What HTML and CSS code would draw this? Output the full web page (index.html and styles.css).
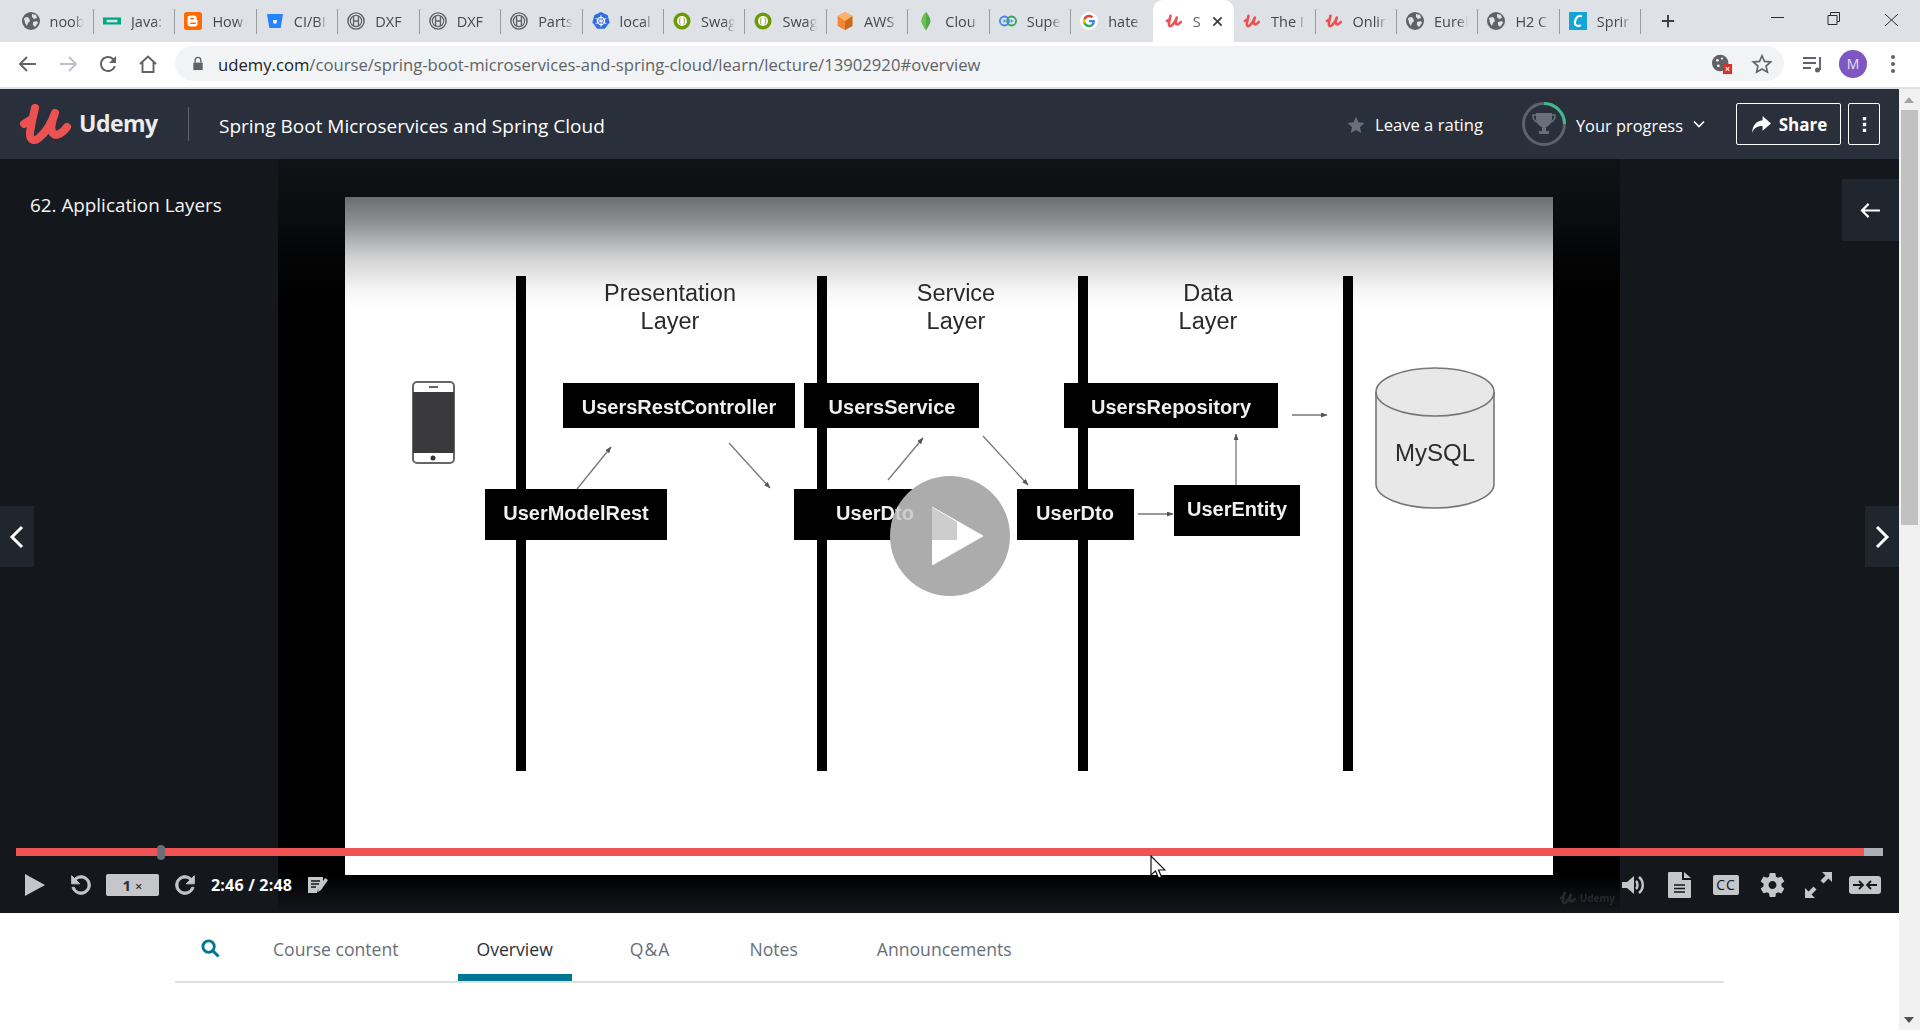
FILE: index.html
```html
<!DOCTYPE html>
<html lang="en">
<head>
    <meta charset="UTF-8">
    <title>Spring Boot Microservices and Spring Cloud | Udemy</title>
    <link rel="stylesheet" href="styles.css">
</head>
<body>
    <!-- icon sprite -->
    <svg class="sprite" xmlns="http://www.w3.org/2000/svg">
        <symbol id="fav-globe" viewBox="0 0 18 18">
            <circle cx="9" cy="9" r="9" fill="#5f6368"/>
            <path d="M2 6l3-1 2 1 1 3-2 2-1 3-2-3zM10 2l4 1 1 3-3 1-2-2zM11 10l4-1 1 2-3 4-2-2z" fill="#dee1e6"/>
        </symbol>
        <symbol id="fav-hpe" viewBox="0 0 20 18">
            <path d="M0 5h20v8H0zM4 7.500v3h12v-3z" fill="#01a982" fill-rule="evenodd"/>
        </symbol>
        <symbol id="fav-blogger" viewBox="0 0 20 20">
            <rect width="20" height="20" rx="3" fill="#ff6a00"/>
            <path d="M7 4h4a3 3 0 0 1 3 3v1a1 1 0 0 0 1 1v4a3 3 0 0 1-3 3H7a3 3 0 0 1-3-3V7a3 3 0 0 1 3-3z" fill="#fff"/>
            <path d="M7.500 7.500h3M7.500 12.500h5" stroke="#ff6a00" stroke-width="1.600" stroke-linecap="round"/>
        </symbol>
        <symbol id="fav-bitbucket" viewBox="0 0 18 18">
            <path d="M1 2h16l-2.300 14H3.300z" fill="#2684ff"/>
            <path d="M7 8h4l-.6 3.500H7.600z" fill="#fff"/>
        </symbol>
        <symbol id="fav-bosch" viewBox="0 0 20 20">
            <circle cx="10" cy="10" r="9" fill="none" stroke="#5f6368" stroke-width="1.600"/>
            <circle cx="10" cy="10" r="6.300" fill="none" stroke="#5f6368" stroke-width="1.300"/>
            <path d="M7.300 4.500v11M12.700 4.500v11M7.300 10h5.400" stroke="#5f6368" stroke-width="1.500" fill="none"/>
        </symbol>
        <symbol id="fav-k8s" viewBox="0 0 20 20">
            <path d="M10 0l7.500 3.600 2 8.200-5.200 6.700H5.700L.5 11.800l2-8.200z" fill="#326ce5"/>
            <circle cx="10" cy="10" r="4" fill="none" stroke="#fff" stroke-width="1.300"/>
            <path d="M10 3.500v13M4 7l12 6M16 7L4 13" stroke="#fff" stroke-width="1"/>
        </symbol>
        <symbol id="fav-swagger" viewBox="0 0 20 20">
            <circle cx="10" cy="10" r="9.500" fill="#6b9a06"/>
            <circle cx="10" cy="10" r="5.500" fill="#fff"/>
            <path d="M8.500 6.500c-1.500 0-1 2-1 3s-1 .5-1 .5 1 0 1 1-.5 2.500 1 2.500M11.500 6.500c1.500 0 1 2 1 3s1 .5 1 .5-1 0-1 1 .5 2.500-1 2.500" stroke="#6b9a06" stroke-width=".9" fill="none"/>
        </symbol>
        <symbol id="fav-aws" viewBox="0 0 20 22">
            <path d="M10 0l9 5v12l-9 5-9-5V5z" fill="#f58534"/>
            <path d="M10 11l9-6v12l-9 5z" fill="#c96a1f"/>
            <path d="M10 0l9 5-9 6-9-6z" fill="#fbb36c"/>
        </symbol>
        <symbol id="fav-mongo" viewBox="0 0 12 22">
            <path d="M6 0c3 4 5.500 7 5.500 11S8 18 6.500 22H5.500C4 18 .5 15 .5 11S3 4 6 0z" fill="#4faa41"/>
            <path d="M6 0v22C4 18 .5 15 .5 11S3 4 6 0z" fill="#6cc24a"/>
        </symbol>
        <symbol id="fav-super" viewBox="0 0 20 14">
            <circle cx="6" cy="7" r="5" fill="none" stroke="#4285f4" stroke-width="2"/>
            <circle cx="14" cy="7" r="5" fill="none" stroke="#34a853" stroke-width="2"/>
            <path d="M5 5l3 2-3 2zM13 5l3 2-3 2z" fill="#4285f4"/>
        </symbol>
        <symbol id="fav-google" viewBox="0 0 24 24">
            <circle cx="12" cy="12" r="12" fill="#fff"/>
            <path d="M20 12.300c0-.6 0-1.100-.1-1.600H12v3.100h4.500c-.2 1-.8 1.900-1.700 2.500v2h2.700c1.600-1.500 2.500-3.600 2.500-6z" fill="#4285f4"/>
            <path d="M12 20.300c2.200 0 4.100-.7 5.500-2l-2.700-2.100c-.7.500-1.700.8-2.800.8-2.100 0-3.900-1.400-4.600-3.400H4.600v2.100c1.400 2.800 4.200 4.600 7.400 4.600z" fill="#34a853"/>
            <path d="M7.400 13.600c-.3-1-.3-2.200 0-3.200V8.300H4.600c-1 1.800-1 5.600 0 7.400z" fill="#fbbc05"/>
            <path d="M12 7c1.200 0 2.300.4 3.200 1.200l2.400-2.400C16.100 4.500 14.200 3.700 12 3.700c-3.200 0-6 1.800-7.400 4.600l2.800 2.100C8.100 8.400 9.900 7 12 7z" fill="#ea4335"/>
        </symbol>
        <symbol id="fav-conf" viewBox="0 0 20 20">
            <rect width="20" height="20" fill="#12a5d6"/>
            <path d="M13.500 4.500C10 3.500 7 7 6.500 11.500c-.3 3 2.500 5 6 3.500" fill="none" stroke="#fff" stroke-width="2.400" stroke-linecap="round"/>
        </symbol>
        <symbol id="udemy-u" viewBox="0 0 56 50">
            <path d="M6 25l8-5M17 9C15 17 13 27 12 33c-1 9 5 10 10 5C28 33 34 22 37 14c-3 8-5 14-3 19 2 5 9 3 15-5" fill="none" stroke="currentColor" stroke-width="8" stroke-linecap="round" stroke-linejoin="round"/>
        </symbol>
        <symbol id="refresh" viewBox="0 0 24 24">
            <path d="M17.650 6.350A7.958 7.958 0 0 0 12 4c-4.420 0-7.990 3.580-7.990 8s3.570 8 7.990 8c3.730 0 6.840-2.550 7.730-6h-2.080A5.990 5.990 0 0 1 12 18c-3.310 0-6-2.690-6-6s2.690-6 6-6c1.660 0 3.140.690 4.220 1.780L13 11h7V4l-2.350 2.350z" fill="currentColor"/>
        </symbol>
    </svg>

    <div class="tabstrip">
        <div class="tab"><svg class="fav"><use href="#fav-globe"/></svg><span class="tab-label">noob</span></div>
        <div class="tab"><svg class="fav"><use href="#fav-hpe"/></svg><span class="tab-label">Java:</span></div>
        <div class="tab"><svg class="fav"><use href="#fav-blogger"/></svg><span class="tab-label">How</span></div>
        <div class="tab"><svg class="fav"><use href="#fav-bitbucket"/></svg><span class="tab-label">CI/BI</span></div>
        <div class="tab"><svg class="fav"><use href="#fav-bosch"/></svg><span class="tab-label">DXF</span></div>
        <div class="tab"><svg class="fav"><use href="#fav-bosch"/></svg><span class="tab-label">DXF</span></div>
        <div class="tab"><svg class="fav"><use href="#fav-bosch"/></svg><span class="tab-label">Parts</span></div>
        <div class="tab"><svg class="fav"><use href="#fav-k8s"/></svg><span class="tab-label">local</span></div>
        <div class="tab"><svg class="fav"><use href="#fav-swagger"/></svg><span class="tab-label">Swag</span></div>
        <div class="tab"><svg class="fav"><use href="#fav-swagger"/></svg><span class="tab-label">Swag</span></div>
        <div class="tab"><svg class="fav"><use href="#fav-aws"/></svg><span class="tab-label">AWS</span></div>
        <div class="tab"><svg class="fav"><use href="#fav-mongo"/></svg><span class="tab-label">Clou</span></div>
        <div class="tab"><svg class="fav"><use href="#fav-super"/></svg><span class="tab-label">Supe</span></div>
        <div class="tab tab-before-active"><svg class="fav"><use href="#fav-google"/></svg><span class="tab-label">hate</span></div>
        <div class="tab tab-active">
            <svg class="fav fav-udemy"><use href="#udemy-u"/></svg><span class="tab-label tab-label-short">S</span>
            <svg class="tab-close" viewBox="0 0 12 12"><path d="M1.500 1.500l9 9M10.500 1.500l-9 9"/></svg>
        </div>
        <div class="tab"><svg class="fav fav-udemy"><use href="#udemy-u"/></svg><span class="tab-label">The I</span></div>
        <div class="tab"><svg class="fav fav-udemy"><use href="#udemy-u"/></svg><span class="tab-label">Onlir</span></div>
        <div class="tab"><svg class="fav"><use href="#fav-globe"/></svg><span class="tab-label">Eurel</span></div>
        <div class="tab"><svg class="fav"><use href="#fav-globe"/></svg><span class="tab-label">H2 C</span></div>
        <div class="tab"><svg class="fav"><use href="#fav-conf"/></svg><span class="tab-label">Sprir</span></div>
        <svg class="new-tab" viewBox="0 0 16 16"><path d="M8 1v14M1 8h14"/></svg>
        <div class="window-controls">
            <svg class="win-btn" viewBox="0 0 58 42"><path d="M25 17.500h13"/></svg>
            <svg class="win-btn" viewBox="0 0 58 42"><path d="M24 15.500h9v9h-9zM26.500 15.500v-3h9v9h-2.500"/></svg>
            <svg class="win-btn" viewBox="0 0 58 42"><path d="M23 14l13 12M36 14L23 26"/></svg>
        </div>
    </div>

    <div class="toolbar">
        <svg class="tool-btn" viewBox="0 0 40 40"><path d="M28 20H12M19 13l-7 7 7 7"/></svg>
        <svg class="tool-btn tool-btn-off" viewBox="0 0 40 40"><path d="M12 20h16M21 13l7 7-7 7"/></svg>
        <svg class="tool-btn tool-btn-fill" viewBox="0 0 40 40"><use href="#refresh" x="8" y="8" width="24" height="24"/></svg>
        <svg class="tool-btn" viewBox="0 0 40 40"><path d="M12 20l8-7.500 8 7.500M14.500 18.500V28h11v-9.500"/></svg>
        <div class="omnibox">
            <svg class="lock" viewBox="0 0 12 16"><path d="M1 7h10v8H1z" fill="#5f6368"/><path d="M3 7V4.500a3 3 0 0 1 6 0V7" fill="none" stroke="#5f6368" stroke-width="1.500"/></svg>
            <div class="url"><span class="url-host">udemy.com</span>/course/spring-boot-microservices-and-spring-cloud/learn/lecture/13902920#overview</div>
            <svg class="omni-icon" viewBox="0 0 24 24">
                <circle cx="10" cy="11" r="9" fill="#5f6368"/>
                <circle cx="7" cy="8" r="1.500" fill="#f1f3f4"/><circle cx="12" cy="6" r="1.200" fill="#f1f3f4"/><circle cx="8" cy="14" r="1.500" fill="#f1f3f4"/>
                <rect x="13" y="12" width="10" height="11" fill="#d93025"/>
                <path d="M16 15.500l4 4M20 15.500l-4 4" stroke="#fff" stroke-width="1.200"/>
            </svg>
            <svg class="omni-star" viewBox="0 0 24 24"><path d="M12 3l2.700 6.200 6.800.6-5.100 4.500 1.500 6.600L12 17.400l-5.900 3.500 1.500-6.600-5.100-4.500 6.800-.6z"/></svg>
        </div>
        <svg class="tool-btn tool-queue" viewBox="0 0 40 40"><path d="M11 14h13M11 19h13M11 24h8M28 13v13"/><circle cx="25.500" cy="26" r="2.500" fill="#5f6368" stroke="none"/></svg>
        <div class="avatar">M</div>
        <svg class="tool-btn tool-kebab" viewBox="0 0 40 40"><circle cx="20" cy="13" r="2"/><circle cx="20" cy="20" r="2"/><circle cx="20" cy="27" r="2"/></svg>
    </div>

    <div class="window-body">
        <main class="page">
            <header class="course-header">
                <div class="brand">
                    <svg class="brand-mark"><use href="#udemy-u"/></svg>
                    <span class="brand-name">Udemy</span>
                </div>
                <div class="course-title">Spring Boot Microservices and Spring Cloud</div>
                <div class="rating">
                    <svg class="rating-star" viewBox="0 0 24 24"><path d="M12 1l3.300 7.400 8 .8-6 5.400 1.700 8L12 18.500 5 22.600l1.700-8-6-5.400 8-.8z"/></svg>
                    Leave a rating
                </div>
                <svg class="progress-ring" viewBox="0 0 44 44">
                    <circle cx="22" cy="22" r="20.500" fill="none" stroke="#5d636c" stroke-width="3"/>
                    <path d="M22 1.500A20.500 20.500 0 0 1 42.500 22" fill="none" stroke="#41b68f" stroke-width="3"/>
                    <path d="M14 11h16v5c0 5-3 8-6 9v4h3v3H17v-3h3v-4c-3-1-6-4-6-9z" fill="#686f7a"/>
                    <path d="M14 13h-3c0 4 1 6 4 7M30 13h3c0 4-1 6-4 7" fill="none" stroke="#686f7a" stroke-width="1.600"/>
                </svg>
                <div class="progress-label">Your progress</div>
                <svg class="progress-chevron" viewBox="0 0 12 8"><path d="M1 1.500l5 5 5-5"/></svg>
                <button class="head-btn share-btn">
                    <svg class="share-icon" viewBox="0 0 20 20"><path d="M11.500 2l8 7-8 7v-4.500C7 11.500 3.500 13 1.500 18 2 11 5.500 6.500 11.500 6z"/></svg>
                    Share
                </button>
                <button class="head-btn kebab-btn" aria-label="More">
                    <svg viewBox="0 0 6 20"><path d="M1 1h4v4H1zM1 8h4v4H1zM1 15h4v4H1z"/></svg>
                </button>
            </header>

            <section class="player">
                <div class="video">
                    <svg class="slide" viewBox="345 197 1208 678">
                        <defs>
                            <marker id="head" markerUnits="userSpaceOnUse" markerWidth="8" markerHeight="8" refX="6" refY="2.500" orient="auto">
                                <path d="M0 0L6.500 2.500L0 5z" fill="#555"/>
                            </marker>
                        </defs>
                        <rect x="345" y="197" width="1208" height="678" fill="#fff"/>

                        <rect class="lane" x="516" y="276" width="10" height="495"/>
                        <rect class="lane" x="817" y="276" width="10" height="495"/>
                        <rect class="lane" x="1078" y="276" width="10" height="495"/>
                        <rect class="lane" x="1343" y="276" width="10" height="495"/>

                        <text class="layer-title" x="670" y="301">Presentation</text>
                        <text class="layer-title" x="670" y="329">Layer</text>
                        <text class="layer-title" x="956" y="301">Service</text>
                        <text class="layer-title" x="956" y="329">Layer</text>
                        <text class="layer-title" x="1208" y="301">Data</text>
                        <text class="layer-title" x="1208" y="329">Layer</text>

                        <!-- phone -->
                        <rect x="413" y="382" width="41" height="81" rx="4" fill="#fff" stroke="#666" stroke-width="2"/>
                        <rect x="413" y="392" width="41" height="61" fill="#3a393b"/>
                        <rect x="429" y="386" width="9" height="2" fill="#666"/>
                        <circle cx="433" cy="458" r="2.500" fill="#333"/>

                        <line class="flow" x1="577" y1="489" x2="611" y2="447"/>
                        <line class="flow" x1="729" y1="443" x2="770" y2="488"/>
                        <line class="flow" x1="888" y1="480" x2="923" y2="438"/>
                        <line class="flow" x1="983" y1="436" x2="1028" y2="485"/>
                        <line class="flow" x1="1292" y1="415" x2="1327" y2="415"/>
                        <line class="flow" x1="1236" y1="485" x2="1236" y2="434"/>
                        <line class="flow" x1="1138" y1="514" x2="1173" y2="514"/>

                        <rect class="box" x="563" y="383" width="232" height="45"/>
                        <text class="box-label" x="679" y="414">UsersRestController</text>
                        <rect class="box" x="804" y="383" width="175" height="45"/>
                        <text class="box-label" x="892" y="414">UsersService</text>
                        <rect class="box" x="1064" y="383" width="214" height="45"/>
                        <text class="box-label" x="1171" y="414">UsersRepository</text>
                        <rect class="box" x="485" y="489" width="182" height="51"/>
                        <text class="box-label" x="576" y="520">UserModelRest</text>
                        <rect class="box" x="794" y="489" width="163" height="51"/>
                        <rect class="box" x="1017" y="489" width="117" height="51"/>
                        <text class="box-label" x="1075" y="520">UserDto</text>
                        <rect class="box" x="1174" y="485" width="126" height="51"/>
                        <text class="box-label" x="1237" y="516">UserEntity</text>

                        <!-- database -->
                        <path class="db" d="M1376 392A59 24 0 0 1 1494 392V484A59 24 0 0 1 1376 484Z"/>
                        <path class="db-lid" d="M1376 392A59 24 0 0 0 1494 392"/>
                        <text class="db-label" x="1435" y="461">MySQL</text>

                        <!-- big play button over the slide -->
                        <circle cx="950" cy="536" r="60" fill="#acacac"/>
                        <text class="box-label" x="875" y="520">UserD<tspan class="box-label-dim">to</tspan></text>
                        <path d="M933 508L982 536L933 564Z" fill="#fff" stroke="#fff" stroke-width="2" stroke-linejoin="round"/>
                        <path d="M932 507L957 522V540H932Z" fill="#cdcdcd"/>
                    </svg>
                    <div class="fade-top"></div>
                    <div class="fade-bottom"></div>
                    <div class="watermark">
                        <svg class="watermark-mark"><use href="#udemy-u"/></svg>
                        <span>Udemy</span>
                    </div>
                </div>

                <div class="lecture-title">62. Application Layers</div>

                <button class="side-btn side-prev" aria-label="Previous">
                    <svg viewBox="0 0 16 26"><path d="M13 3L3 13l10 10"/></svg>
                </button>
                <button class="side-btn side-next" aria-label="Next">
                    <svg viewBox="0 0 16 26"><path d="M3 3l10 10L3 23"/></svg>
                </button>
                <button class="side-btn side-back" aria-label="Expand sidebar">
                    <svg viewBox="0 0 22 18"><path d="M21 9H3M9 2L2 9l7 7"/></svg>
                </button>

                <div class="controls">
                    <div class="progress">
                        <div class="progress-fill" style="width: 98.98%"></div>
                        <div class="progress-handle"></div>
                    </div>
                    <div class="control-row">
                        <div class="control-group">
                            <svg class="ctl ctl-play" viewBox="0 0 20 22"><path d="M0 0l20 11L0 22z"/></svg>
                            <svg class="ctl ctl-back"><use href="#refresh"/></svg>
                            <div class="rate">1 <small>×</small></div>
                            <svg class="ctl ctl-forward"><use href="#refresh"/></svg>
                            <div class="time">2:46 / 2:48</div>
                            <svg class="ctl ctl-note" viewBox="0 0 20 18">
                                <path d="M0 1h15v6l-5 7 -1 3H0z"/>
                                <path d="M3 5h9M3 8h8M3 11h5" stroke="#14171c" stroke-width="1.500"/>
                                <path d="M17 2l3 2-7 10-3 2 .5-3.500z"/>
                            </svg>
                        </div>
                        <div class="control-group">
                            <svg class="ctl ctl-volume" viewBox="0 0 23 24">
                                <path d="M0 9h5l7-6v18l-7-6H0z"/>
                                <path d="M14 8c2 2 2 6 0 8M17 4c5 4 5 12 0 16" fill="none" stroke="#c5c6c9" stroke-width="2.500"/>
                            </svg>
                            <svg class="ctl ctl-doc" viewBox="0 0 23 26">
                                <path d="M0 1a1 1 0 0 1 1-1h13v8h9v17a1 1 0 0 1-1 1H1a1 1 0 0 1-1-1zM16 0l7 6h-7z"/>
                                <path d="M6 13h11M6 16.500h11M6 20h11" stroke="#14171c" stroke-width="1.500"/>
                            </svg>
                            <div class="cc">CC</div>
                            <svg class="ctl ctl-gear" viewBox="2 2 20 20"><path d="M19.140 12.940c.04-.3.06-.61.06-.94 0-.32-.02-.64-.07-.94l2.030-1.580c.18-.14.23-.41.12-.61l-1.920-3.320c-.12-.22-.37-.29-.59-.22l-2.390.96c-.5-.38-1.030-.7-1.620-.94l-.36-2.540c-.04-.24-.24-.41-.48-.41h-3.840c-.24 0-.43.17-.47.41l-.36 2.540c-.59.24-1.130.57-1.620.94l-2.390-.96c-.22-.08-.47 0-.59.22L2.740 8.870c-.12.21-.08.47.12.61l2.030 1.580c-.05.3-.09.63-.09.94s.02.64.07.94l-2.030 1.580c-.18.14-.23.41-.12.61l1.920 3.320c.12.22.37.29.59.22l2.390-.96c.5.38 1.030.7 1.620.94l.36 2.540c.05.24.24.41.48.41h3.840c.24 0 .44-.17.47-.41l.36-2.540c.59-.24 1.130-.56 1.620-.94l2.390.96c.22.08.47 0 .59-.22l1.920-3.320c.12-.22.07-.47-.12-.61l-2.010-1.580zM12 15.200c-1.760 0-3.200-1.440-3.200-3.200s1.440-3.200 3.200-3.200 3.200 1.440 3.200 3.200-1.440 3.200-3.200 3.200z"/></svg>
                            <svg class="ctl ctl-expand" viewBox="0 0 27 26">
                                <path d="M17 0h10v10l-3.500-3.500-5 5-3-3 5-5zM0 26V16l3.500 3.500 5-5 3 3-5 5L10 26z"/>
                            </svg>
                            <svg class="ctl ctl-theatre" viewBox="0 0 32 18">
                                <rect width="32" height="18" rx="3"/>
                                <path d="M4 9h10M10 5l4 4-4 4M28 9H18M22 5l-4 4 4 4" fill="none" stroke="#14171c" stroke-width="1.800"/>
                            </svg>
                        </div>
                    </div>
                </div>

                <svg class="cursor" viewBox="0 0 16 24"><path d="M1 1v19l4.500-4 3 7 3-1.300-3-6.700H15z"/></svg>
            </section>

            <nav class="course-nav">
                <a class="nav-item nav-search" aria-label="Search">
                    <svg viewBox="0 0 20 20"><circle cx="8" cy="8" r="6"/><path d="M12.500 12.500L18.500 18.500"/></svg>
                </a>
                <a class="nav-item nav-content">Course content</a>
                <a class="nav-item nav-item-active">Overview</a>
                <a class="nav-item nav-qa">Q&amp;A</a>
                <a class="nav-item nav-notes">Notes</a>
                <a class="nav-item">Announcements</a>
            </nav>
        </main>

        <div class="scrollbar">
            <div class="scroll-up"></div>
            <div class="scroll-thumb"></div>
            <div class="scroll-down"></div>
        </div>
    </div>
</body>
</html>
```

FILE: styles.css
```css
* {
    box-sizing: border-box;
}
html, body {
    height: 100%;
}
body {
    margin: 0;
    overflow: hidden;
    background-color: #fff;
    font-family: "Open Sans", Arial, sans-serif;
    color: #29303b;
}
button {
    font-family: inherit;
    cursor: pointer;
}
.sprite {
    position: absolute;
    width: 0;
    height: 0;
}

/* browser tabs */
.tabstrip {
    display: flex;
    align-items: center;
    height: 42px;
    padding-left: 12.5px;
    background-color: #dee1e6;
}
.tab {
    position: relative;
    display: flex;
    align-items: center;
    flex: 0 0 81.45px;
    min-width: 0;
    height: 42px;
    padding: 0 10px 0 9px;
    font-size: 14.5px;
    color: #45494e;
}
.tab::after {
    content: "";
    position: absolute;
    right: 0;
    top: 9px;
    width: 1px;
    height: 25px;
    background-color: #9a9da2;
}
.tab-before-active::after,
.tab-active::after {
    display: none;
}
.tab-active {
    background-color: #fff;
    border-radius: 10px 10px 0 0;
    padding-left: 12px;
}
.fav {
    flex: 0 0 18px;
    width: 18px;
    height: 18px;
    margin-right: 10px;
}
.fav-udemy {
    color: #ec5252;
}
.tab-label {
    overflow: hidden;
    white-space: nowrap;
    flex: 1;
    -webkit-mask-image: linear-gradient(to right, #000 70%, transparent 100%);
    mask-image: linear-gradient(to right, #000 70%, transparent 100%);
}
.tab-label-short {
    flex: 0 0 14px;
    color: #5f6368;
}
.tab-close {
    flex: 0 0 11px;
    width: 11px;
    height: 11px;
    margin-left: 5px;
    fill: none;
    stroke: #3c4043;
    stroke-width: 2;
}
.new-tab {
    width: 14px;
    height: 14px;
    margin-left: 20px;
    fill: none;
    stroke: #3c4043;
    stroke-width: 2.200;
}
.window-controls {
    display: flex;
    margin-left: auto;
}
.win-btn {
    width: 58px;
    height: 42px;
    fill: none;
    stroke: #2b2b2b;
    stroke-width: 1;
}

/* browser toolbar */
.toolbar {
    display: flex;
    align-items: center;
    height: 47px;
    padding: 0 0 2px 8px;
    background-color: #fff;
    border-bottom: 2px solid #dee1e6;
}
.tool-btn {
    flex: 0 0 40px;
    width: 40px;
    height: 40px;
    fill: none;
    stroke: #5f6368;
    stroke-width: 1.900;
}
.tool-btn-off {
    stroke: #bdc1c6;
}
.tool-btn-fill {
    color: #5f6368;
    stroke: none;
}
.omnibox {
    display: flex;
    align-items: center;
    width: 1609px;
    height: 35px;
    margin: 0 8px 0 7px;
    padding-left: 17px;
    background-color: #f1f3f4;
    border-radius: 18px;
}
.lock {
    width: 12px;
    height: 15px;
    margin-right: 14px;
}
.url {
    flex: 1;
    padding-top: 1px;
    font-size: 16.67px;
    color: #5f6368;
    white-space: nowrap;
}
.url-host {
    color: #202124;
}
.omni-icon {
    width: 22px;
    height: 22px;
    margin-right: 18px;
}
.omni-star {
    width: 22px;
    height: 22px;
    margin-right: 11px;
    fill: none;
    stroke: #5f6368;
    stroke-width: 1.800;
}
.tool-queue {
    margin-right: 1px;
}
.avatar {
    flex: 0 0 28px;
    height: 28px;
    margin: 0 6px;
    border-radius: 50%;
    background-color: #7e57c2;
    color: #e8e0f5;
    font-size: 14px;
    line-height: 28px;
    text-align: center;
}
.tool-kebab {
    fill: #5f6368;
    stroke: none;
}

/* page + scrollbar */
.window-body {
    display: flex;
    height: 941px;
}
.page {
    flex: 0 0 1899px;
    display: flex;
    flex-direction: column;
    background-color: #fff;
}
.scrollbar {
    flex: 0 0 21px;
    position: relative;
    padding: 21px 2px 0;
    background-color: #f1f1f1;
}
.scroll-thumb {
    height: 415px;
    background-color: #c1c1c1;
}
.scroll-up,
.scroll-down {
    position: absolute;
    left: 5px;
    width: 0;
    height: 0;
    border-left: 5.500px solid transparent;
    border-right: 5.500px solid transparent;
}
.scroll-up {
    top: 8px;
    border-bottom: 6px solid #a3a3a3;
}
.scroll-down {
    bottom: 7px;
    border-top: 6px solid #505050;
}

/* course header */
.course-header {
    display: flex;
    align-items: center;
    flex: 0 0 70px;
    padding: 0 19px 0 18px;
    background-color: #29303b;
    color: #fff;
}
.brand {
    display: flex;
    align-items: center;
    width: 171px;
    height: 34px;
    margin-right: 30px;
    border-right: 1px solid #5d636c;
}
.brand-mark {
    flex: 0 0 56px;
    width: 56px;
    height: 50px;
    color: #ec5252;
    margin-right: 5px;
}
.brand-name {
    margin-top: -2px;
    font-size: 23px;
    font-weight: 700;
    color: #ececeb;
    letter-spacing: -0.5px;
}
.course-title {
    padding-top: 3px;
    font-size: 19px;
    color: #fff;
}
.rating {
    display: flex;
    align-items: center;
    margin-left: auto;
    padding-top: 1px;
    font-size: 16.6px;
}
.rating-star {
    width: 18px;
    height: 18px;
    margin-right: 10px;
    fill: #686f7a;
}
.progress-ring {
    width: 44px;
    height: 44px;
    margin-left: 39px;
}
.progress-label {
    margin-left: 10px;
    padding-top: 2px;
    font-size: 16.4px;
}
.progress-chevron {
    width: 12px;
    height: 8px;
    margin: 0 31px 0 10px;
    fill: none;
    stroke: #fff;
    stroke-width: 1.600;
}
.head-btn {
    height: 42px;
    padding: 0;
    background: transparent;
    border: 1px solid #fff;
    border-radius: 2px;
    color: #fff;
    font-size: 17px;
    font-weight: 700;
}
.share-btn {
    display: flex;
    align-items: center;
    justify-content: center;
    width: 105px;
}
.share-icon {
    width: 22px;
    height: 21px;
    margin-right: 7px;
    fill: #fff;
}
.kebab-btn {
    width: 32px;
    margin-left: 7px;
}
.kebab-btn svg {
    display: block;
    width: 5px;
    height: 17px;
    margin: 0 auto;
    fill: #fff;
}

/* player */
.player {
    position: relative;
    flex: 0 0 754px;
    display: flex;
    justify-content: center;
    background-color: #14171c;
}
.video {
    position: relative;
    width: 1342px;
    margin-right: 1px;
    padding: 38px 67px;
    background-color: #000;
}
.slide {
    display: block;
    width: 1208px;
    height: 678px;
    filter: blur(0.7px);
}
.lane {
    fill: #000;
}
.box {
    fill: #000;
}
.box-label {
    font-family: "Liberation Sans", Arial, sans-serif;
    font-size: 20px;
    font-weight: 700;
    fill: #f0f0f0;
    text-anchor: middle;
}
.box-label-dim {
    fill: #cfcfcf;
}
.layer-title {
    font-family: "Liberation Sans", Arial, sans-serif;
    font-size: 23.500px;
    fill: #2a2a2a;
    text-anchor: middle;
}
.flow {
    stroke: #777;
    stroke-width: 1.300;
    marker-end: url(#head);
}
.db {
    fill: #e8e8e8;
    stroke: #777;
    stroke-width: 1.600;
}
.db-lid {
    fill: none;
    stroke: #777;
    stroke-width: 1.600;
}
.db-label {
    font-family: "Liberation Sans", Arial, sans-serif;
    font-size: 24px;
    fill: #2c2c2c;
    text-anchor: middle;
}
.fade-top {
    position: absolute;
    top: 0;
    left: 0;
    right: 0;
    height: 151px;
    background: linear-gradient(to bottom,
        rgba(20, 23, 28, 0.8) 0,
        rgba(20, 23, 28, 0.63) 38px,
        rgba(20, 23, 28, 0.48) 64px,
        rgba(20, 23, 28, 0.2) 98px,
        rgba(20, 23, 28, 0.04) 131px,
        rgba(20, 23, 28, 0) 151px);
}
.fade-bottom {
    position: absolute;
    bottom: 0;
    left: 0;
    right: 0;
    height: 38px;
    background: linear-gradient(to bottom, rgba(20, 23, 28, 0), #14171c);
}
.watermark {
    position: absolute;
    right: 5px;
    bottom: 7px;
    display: flex;
    align-items: center;
    font-size: 10px;
    font-weight: 700;
    color: #26292d;
    filter: blur(0.6px);
}
.watermark-mark {
    width: 18px;
    height: 16px;
    margin-right: 3px;
    color: #26292d;
}
.lecture-title {
    position: absolute;
    top: 32px;
    left: 30px;
    font-size: 18.85px;
    line-height: 28px;
    color: #f5f5f5;
}
.side-btn {
    position: absolute;
    padding: 0;
    border: none;
    background-color: #1f262e;
}
.side-btn svg {
    display: block;
    margin: auto;
    fill: none;
    stroke: #fff;
    stroke-width: 3;
}
.side-prev,
.side-next {
    top: 347px;
    width: 34px;
    height: 61px;
}
.side-prev {
    left: 0;
}
.side-next {
    right: 0;
}
.side-prev svg,
.side-next svg {
    width: 16px;
    height: 26px;
}
.side-back {
    top: 20px;
    right: 0;
    width: 57px;
    height: 62px;
}
.side-back svg {
    width: 21px;
    height: 17px;
    stroke-width: 2.300;
}

/* player controls */
.controls {
    position: absolute;
    left: 0;
    right: 0;
    bottom: 0;
    padding: 0 16px;
}
.progress {
    position: relative;
    height: 8px;
    background-color: #abaeb2;
}
.progress-fill {
    height: 100%;
    background-color: #ef5353;
}
.progress-handle {
    position: absolute;
    top: -3px;
    left: 141px;
    width: 8px;
    height: 15px;
    border-radius: 4px;
    background-color: #686f7a;
}
.control-row {
    display: flex;
    justify-content: space-between;
    align-items: center;
    height: 36px;
    margin: 11px 2px 10px 9px;
}
.control-group {
    display: flex;
    align-items: center;
}
.ctl {
    display: block;
    fill: #c5c6c9;
    color: #c5c6c9;
}
.ctl-play {
    width: 20px;
    height: 22px;
    margin-right: 22px;
}
.ctl-back,
.ctl-forward {
    width: 28px;
    height: 28px;
    stroke: #c5c6c9;
    stroke-width: 0.8px;
}
.ctl-back {
    transform: scaleX(-1);
    margin-right: 11px;
}
.ctl-forward {
    margin: 0 12px;
}
.rate {
    width: 53px;
    height: 22px;
    border-radius: 2px;
    background-color: #c5c6c9;
    color: #29303b;
    font-size: 15px;
    font-weight: 700;
    line-height: 22px;
    text-align: center;
}
.rate small {
    font-size: 13px;
    font-weight: 600;
}
.time {
    width: 81px;
    color: #fff;
    font-size: 16px;
    font-weight: 700;
    letter-spacing: 0.2px;
    white-space: nowrap;
}
.ctl-note {
    width: 20px;
    height: 18px;
    margin-left: 16px;
}
.ctl-volume {
    width: 23px;
    height: 24px;
}
.ctl-doc {
    width: 23px;
    height: 26px;
    margin-left: 23px;
}
.cc {
    width: 26px;
    height: 20px;
    margin-left: 22px;
    border-radius: 2px;
    background-color: #c5c6c9;
    color: #14171c;
    font-size: 14px;
    letter-spacing: 1px;
    line-height: 20px;
    text-align: center;
}
.ctl-gear {
    width: 25px;
    height: 26px;
    margin-left: 21px;
}
.ctl-expand {
    width: 27px;
    height: 26px;
    margin-left: 20px;
}
.ctl-theatre {
    width: 32px;
    height: 18px;
    margin-left: 17px;
}
.cursor {
    position: absolute;
    left: 1150px;
    top: 696px;
    width: 16px;
    height: 24px;
    fill: #fff;
    stroke: #111;
    stroke-width: 1.200;
}

/* lecture tabs */
.course-nav {
    display: flex;
    flex: 0 0 69px;
    margin: 0 175px;
    padding-left: 7px;
    border-bottom: 2px solid #dedfe0;
}
.nav-item {
    height: 68px;
    padding: 24px 19px 0;
    margin-right: 39px;
    border-bottom: 7px solid transparent;
    font-size: 17.6px;
    line-height: 24px;
    color: #686f7a;
    white-space: nowrap;
}
.nav-item-active {
    color: #29303b;
    border-bottom-color: #007791;
}
.nav-search {
    margin-right: 15px;
    padding-top: 26px;
}
.nav-search svg {
    display: block;
    width: 19px;
    height: 19px;
    fill: none;
    stroke: #007791;
    stroke-width: 3;
}
.nav-content {
    margin-right: 40px;
}
.nav-qa {
    margin-right: 41px;
    letter-spacing: 1px;
}
.nav-notes {
    margin-right: 41px;
}
```
